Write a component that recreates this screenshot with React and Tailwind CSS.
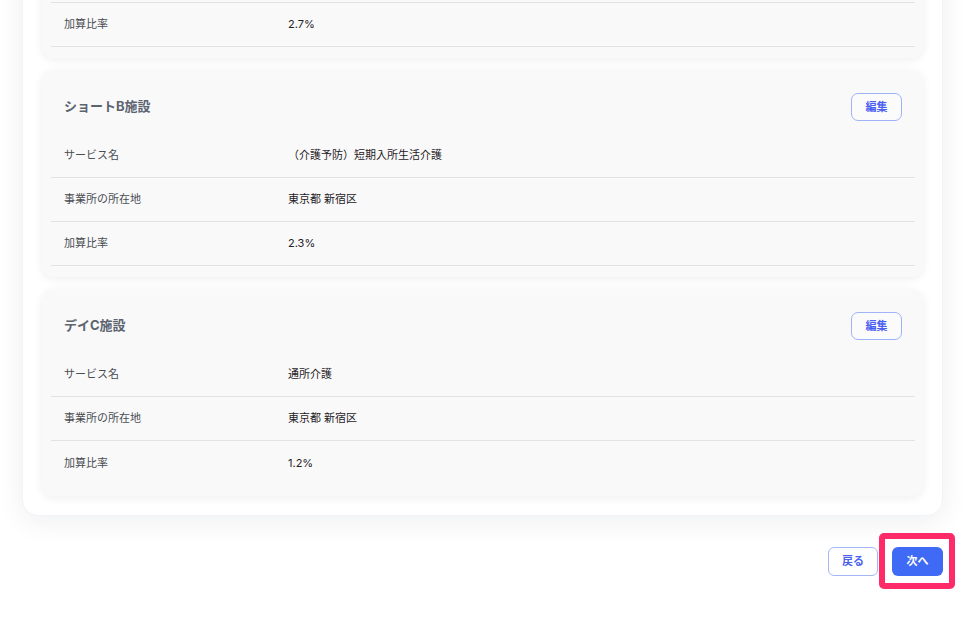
import { useState } from 'react';

const facilities = [
  { name: 'デイA施設', service: '通所介護', address: '東京都 新宿区', rate: '2.7%' },
  { name: 'ショートB施設', service: '（介護予防）短期入所生活介護', address: '東京都 新宿区', rate: '2.3%' },
  { name: 'デイC施設', service: '通所介護', address: '東京都 新宿区', rate: '1.2%', last: true },
];

const Row = ({ label, value, border = true }) => (
  <div className={`flex items-center h-[44px] px-[13px] ${border ? 'border-b border-[#e2e2e4]' : ''}`}>
    <div className="w-[224px] shrink-0 text-[11px] text-[#4a4d52]">{label}</div>
    <div className="text-[11px] text-[#1f2124]">{value}</div>
  </div>
);

const FacilityCard = ({ f }) => (
  <section className="rounded-xl bg-[#f9f9fa] shadow-[0_2px_10px_rgba(20,30,60,0.07)] pt-[23px] pb-[11px]">
    <div className="flex items-center justify-between pl-[22px] pr-[21px] mb-[13px]">
      <h2 className="text-[13px] font-bold text-[#5c6470]">{f.name}</h2>
      <button className="w-[51px] h-[28px] rounded-[7px] border border-[#9fb3f8] bg-white/40 text-[11px] font-bold text-[#4b5ff1]">
        編集
      </button>
    </div>
    <div className="ml-[9px] mr-[8px]">
      <Row label="サービス名" value={f.service} />
      <Row label="事業所の所在地" value={f.address} />
      <Row label="加算比率" value={f.rate} border={!f.last} />
    </div>
  </section>
);

export default function App() {
  const [step] = useState(2);

  return (
    <div
      className="min-h-screen bg-white overflow-hidden"
      style={{ fontFamily: 'Inter, "Noto Sans CJK JP", "Noto Sans", sans-serif' }}
      data-step={step}
    >
      <div className="mt-[-169px] pl-[22px] pr-[31px]">
        <div className="rounded-2xl bg-white shadow-[0_6px_28px_rgba(20,30,60,0.07)] border border-[#f3f3f5] p-[19px] flex flex-col gap-3">
          {facilities.map((f) => (
            <FacilityCard key={f.name} f={f} />
          ))}
        </div>

        <div className="flex justify-end gap-[14px] mt-[31px]">
          <button className="w-[50px] h-[29px] rounded-md border border-[#a3b6f7] bg-white text-[11px] font-bold text-[#4a62ee]">
            戻る
          </button>
          <button className="relative w-[51px] h-[29px] rounded-md bg-[#3e6af6] text-[11px] font-bold text-white">
            次へ
            <span className="absolute -left-[13px] -right-[12px] -top-[14px] -bottom-[13px] rounded-[5px] border-[6px] border-[#ff2a68] pointer-events-none" />
          </button>
        </div>
      </div>
    </div>
  );
}
